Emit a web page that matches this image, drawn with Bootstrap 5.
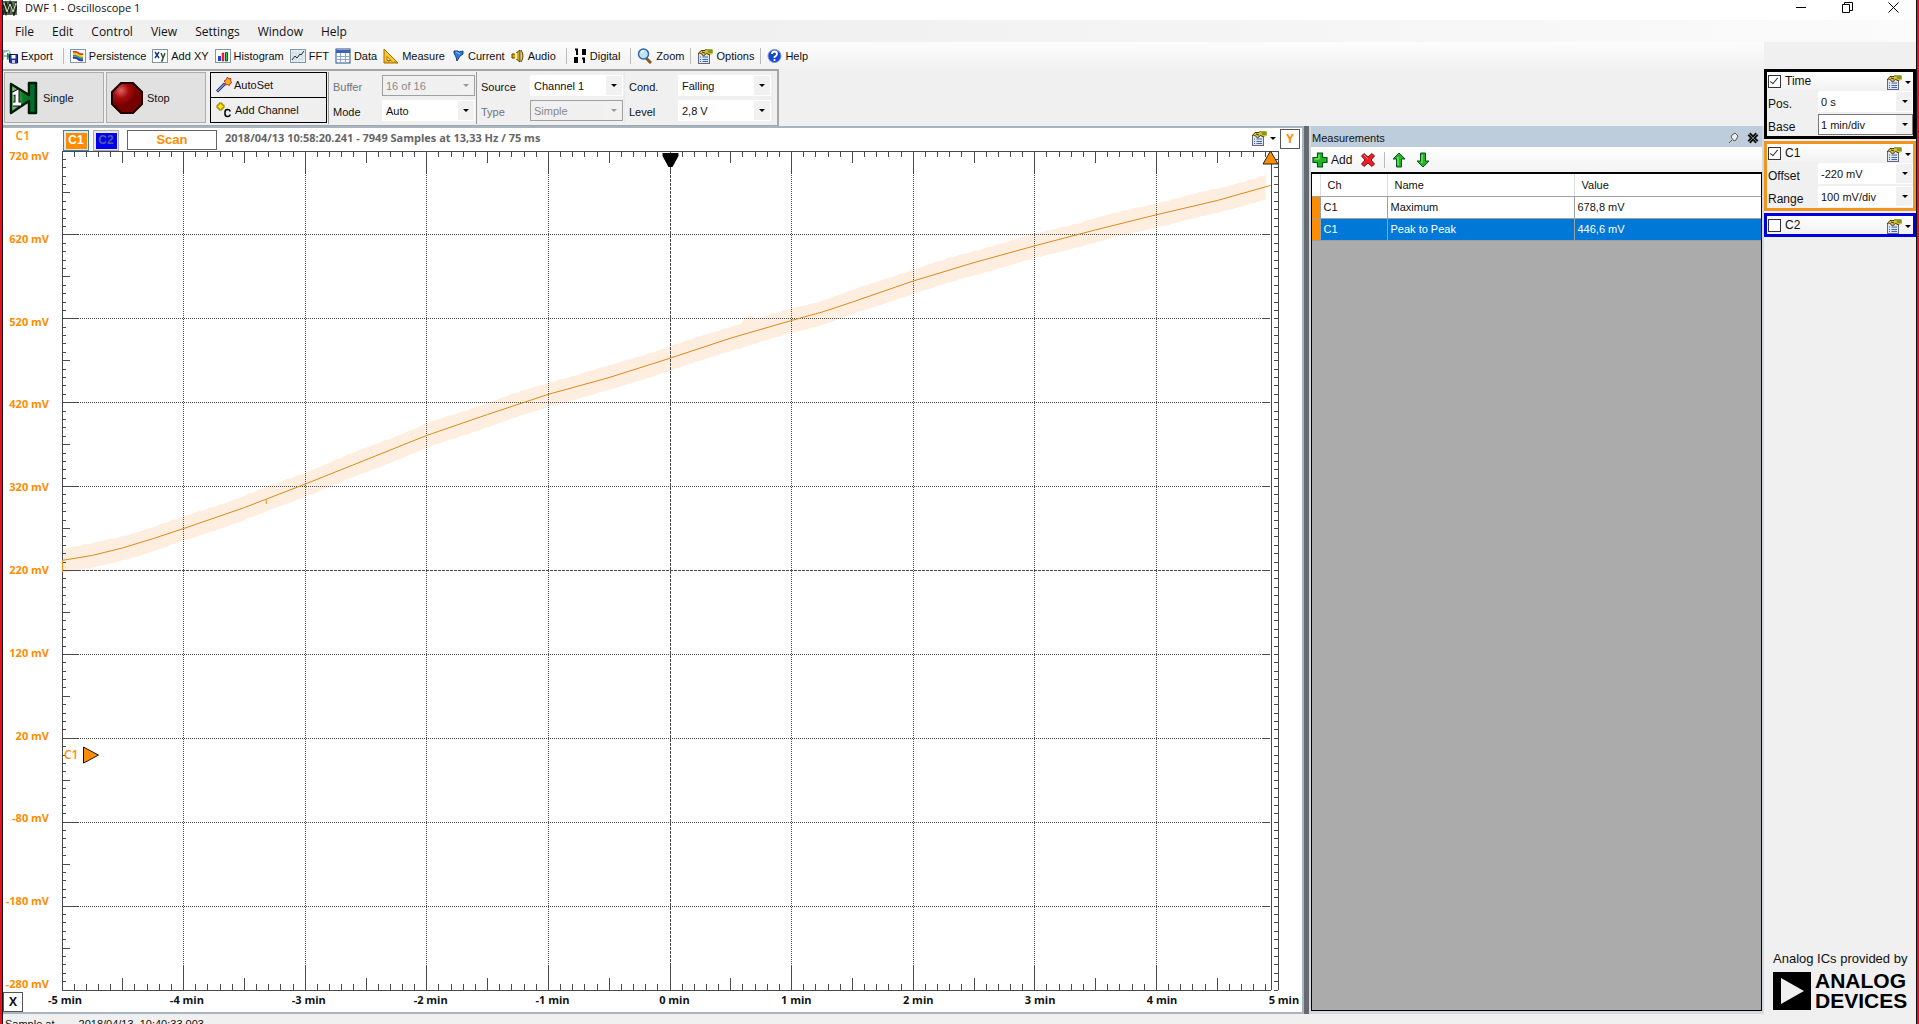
<!DOCTYPE html>
<html lang="en">
<head>
<meta charset="utf-8">
<meta name="viewport" content="width=device-width, initial-scale=1">
<title>DWF 1 - Oscilloscope 1</title>
<link href="https://cdn.jsdelivr.net/npm/bootstrap@5.3.0/dist/css/bootstrap.min.css" rel="stylesheet">
<style>
:root{--orange:#ff8c00;--face:#f0f0f0;--edge:#a5b5c2;--line:#9a9a9a;--ui:"Liberation Sans",Arial,sans-serif;--seg:"Open Sans","Noto Sans",sans-serif}
html,body{height:100%}
body{font:11px/16px var(--ui);color:#111;background:var(--face);overflow:hidden}
button,select,input{font:inherit;color:inherit}
button{background:none;border:0;padding:0}
.app-shell{height:100vh;border-left:2px solid #e81123;border-right:2px solid #e81123;overflow:hidden}
.app-inner{border-left:1px solid #111;border-right:1px solid #111;min-height:0}
.title-strip{height:20px;background:#fff}
.title-strip .caption-text{font:11px/16px var(--seg)}
.win-ctl{width:46px;height:14px;display:flex;justify-content:center;align-items:center}
.menu-strip{height:22px;background:linear-gradient(90deg,#f0f0f0 40%,#fbfbfb);font:12px/24px var(--seg);padding-left:12px}
.menu-strip button{margin-right:18px}
.tool-strip{height:27px;background:linear-gradient(#fdfdfd,#f1f1f1)}
.tool-strip button,.tool-mini button{display:flex;align-items:center;gap:3px;margin-right:6px;white-space:nowrap}
.tool-strip svg,.tool-mini svg{flex:none}
.tool-sep{width:1px;height:16px;background:#bbb;margin-right:6px}
.control-strip{height:57px;width:776px;border:2px solid #a6a6a6;border-left:0;border-bottom-width:1px;padding:1px 5px 0 1px}
.control-strip > *{flex:none}
.big-btn{width:100px;height:51px;background:#e1e1e1;border:1px solid #adadad;display:flex;align-items:center;gap:4px;padding-left:4px;margin-right:2px}
.flat-pair{padding:0 1px 0 2px}
.flat-btn{width:117px;height:26px;border:1px solid #000;background:#efefef;display:flex;align-items:center;padding-left:5px;gap:2px}
.flat-btn + .flat-btn{margin-top:-1px}
.ctl-group{border-left:1px solid var(--line);padding:3px 1px 0 4px;display:grid;grid-template-columns:49px 93px;align-content:start;row-gap:4px;height:52px}
.ctl-group label{line-height:24px;height:21px}
.combo{position:relative;height:21px;background:#fff;border:1px solid #fff}
.combo select{appearance:none;border:0;background:transparent;width:100%;height:100%;padding:0 18px 0 3px;line-height:18px;display:block;opacity:1;outline:0;position:relative;z-index:1}
.combo::before{content:"";position:absolute;right:0;top:0;bottom:0;width:16px;background:#f1f1f1}
.combo::after{content:"";position:absolute;right:5px;top:8px;border:3px solid transparent;border-top-color:#000;border-bottom:0}
.combo.off{background:#f0f0f0;border-color:#a0a0a0;color:#888}
.combo.off::after{border-top-color:#999}
.plot-pane{border:2px solid var(--edge);border-left:0;background:#fff;min-width:0}
.plot-head{height:20px}
.chan-btn{width:26px;height:21px;margin-top:2px;border:1px solid #aaa;padding:1px;background:#e8e8e8;font:bold 12px/15px var(--ui);display:flex;align-items:center;justify-content:center}
.chan-btn span{display:block;width:21px;height:16px}
.chan-btn.c-one{border-color:#3c7fb1;background:#dbe9f3;margin-left:11px}
.c-one span{background:var(--orange);color:#fff}
.c-two span{background:#0000f0;color:#555a9a}
.scan-box{width:90px;height:20px;margin-top:2px;border:1px solid #666;color:var(--orange);font:bold 13px/18px var(--ui);text-align:center}
.stamp{font:bold 11px/20px var(--seg);color:#666}
.y-btn,.x-btn{border:1px solid #555;font:bold 12px/16px var(--seg);width:20px;height:20px;background:#fff}
.y-btn{color:var(--orange);margin:1px 2px 0 4px}
.y-labels{width:49px;padding-right:3px;font:bold 11px/16px var(--seg);color:var(--orange);text-align:right}
.x-labels{font:bold 11px/16px var(--seg);color:#111;margin-left:24px}
.x-labels span{width:36px;text-align:center;white-space:nowrap}
.axis-title{width:49px;font:600 12px/16px var(--seg);color:var(--orange);padding-right:22px;text-align:right}
.scope-box{position:relative;min-width:0}
.scope-box svg{position:absolute;inset:0;width:100%;height:100%}
.scope-box text{font:600 12px var(--seg);fill:var(--orange)}
.splitter{width:5px;background:#666a6e}
.meas-pane{width:455px;padding:0 2px 3px 2px;background:#d3d9df}
.meas-title{height:21px;background:#becddb;padding:2px 3px 0 1px}
.tool-mini{height:25px;background:linear-gradient(#fff,#f3f3f3);font-size:12px;padding-left:1px}
.tool-mini button{margin-right:8px}
.meas-grid{border:1px solid #000;border-top-width:2px;background:#ababab;min-height:0}
.meas-grid table{width:100%;table-layout:fixed;border-collapse:collapse;background:#fff}
.meas-grid th,.meas-grid td{height:22px;border-right:1px solid #a0a0a0;border-bottom:1px solid #a0a0a0;padding:0 3px;font-weight:400;line-height:20px}
.meas-grid th{padding-left:7px;border-right-color:#ddd}
.meas-grid tr>:first-child{width:8px;padding:0}
.meas-grid tbody td:first-child{background:var(--orange)}
.meas-grid .picked td:not(:first-child){background:#0078d7;color:#fff}
.meas-grid tr>:last-child{border-right:0}
.side-pane{width:152px;padding-top:27px}
.side-box{border:3px solid #000;background:#f0f0f0;margin-bottom:2px}
.side-head{height:18px;background:linear-gradient(#fff,#f2f2f2);font-size:12px}
.side-head input{appearance:none;width:13px;height:13px;border:1px solid #333;background:#fff;margin:0 4px 0 1px;position:relative}
.side-head input:checked::after{content:"";position:absolute;left:3px;top:0;width:4px;height:8px;border:solid #333;border-width:0 1px 1px 0;transform:rotate(40deg)}
.opt-btn{display:flex;align-items:center;gap:3px;margin-left:auto;padding-top:2px}
.side-head .opt-btn{margin-right:2px}
.side-row{display:grid;grid-template-columns:50px 1fr;height:23px;align-items:center;padding-left:1px;font-size:12px}
.side-row label{padding-top:4px}
.side-row .combo{font-size:11px}
.side-row .combo select{padding-left:2px}
.side-row .combo::after{right:4px}
.combo.lined{border-color:#777}
.adi{padding:0 8px 3px 9px}
.adi-small{font:13px/16px var(--ui);white-space:nowrap}
.adi-name{font:bold 21px/20px var(--ui);color:#000}
.status-strip{height:10px;overflow:hidden;line-height:16px;padding:2px 2px 0;flex:none}
.arrow-down{width:0;height:0;border:3px solid transparent;border-top-color:#000;border-bottom:0;display:inline-block}
.fill-y{min-height:0}
.fill-x{min-width:0}
</style>
<script src="https://cdn.jsdelivr.net/npm/bootstrap@5.3.0/dist/js/bootstrap.bundle.min.js"></script>
</head>
<body>
<svg width="0" height="0" class="position-absolute">
<symbol id="i-opt" viewBox="0 0 16 16"><rect x="1.500" y="5.500" width="11" height="10" fill="#dce6f5" stroke="#667"/><path d="M3 9h1M5.500 9H11M3 11.500h1M5.500 11.500H11M3 13.500h1M5.500 13.500H11" stroke="#4668a8"/><path d="M1 6l3-3.500h4L9.500 1H15l1 1.500v3L13 7 9.500 5.500 6.500 8 3.500 5z" fill="#d6bd3a"/><path d="M1 6l3-3.500h4L9.500 1M3.500 5l3 3 3-2.500L13 7M5 4l3 1" stroke="#413a10" fill="none"/><path d="M10 1.500h5.500v3.500h-4z" fill="#7a9a22"/></symbol>
</svg>
<div class="app-shell"><div class="app-inner d-flex flex-column h-100">

<header class="title-strip d-flex align-items-start flex-shrink-0">
  <svg width="14" height="16" viewBox="0 0 14 16"><path d="M0 1h14v14H0z" fill="#5b6b55"/><path d="M0 15L3 3l3 9 2-10 2 10 3-10M0 5l3 9 4-12 4 13 3-9" fill="none" stroke="#1c2418" stroke-width="1.500"/><path d="M1 3l3 9 3-8 3 8 3-9" fill="none" stroke="#d3e3c9"/></svg>
  <span class="caption-text ms-1 ps-1">DWF 1 - Oscilloscope 1</span>
  <div class="ms-auto d-flex">
    <button class="win-ctl" aria-label="Minimise"><svg width="11" height="11"><path d="M0 5.500h10" stroke="#000"/></svg></button>
    <button class="win-ctl" aria-label="Restore"><svg width="11" height="11"><path d="M.5 2.500h7v8h-7zM2.500 2.500v-2h8v8h-3" fill="none" stroke="#000"/></svg></button>
    <button class="win-ctl" aria-label="Close"><svg width="11" height="11"><path d="M.5 .5l10 10M10.500 .5l-10 10" stroke="#000"/></svg></button>
  </div>
</header>

<nav class="menu-strip d-flex flex-shrink-0" aria-label="Menu">
  <button>File</button><button>Edit</button><button>Control</button><button>View</button><button>Settings</button><button>Window</button><button>Help</button>
</nav>

<div class="d-flex flex-grow-1 fill-y">
<div class="d-flex flex-column flex-grow-1 fill-x">
  <div class="tool-strip d-flex align-items-center flex-shrink-0">
    <button><svg width="15" height="16" viewBox="0 0 15 16"><path d="M0 2h6l2 3v7H0z" fill="#8fc0c8"/><path d="M1 5l5-2v7l-5 3z" fill="#fff"/><path d="M1 8h5M4 5l4 3-4 3" fill="#2a8a3a" stroke="#2a8a3a"/><path d="M6.500 6.500h8v8.500H7.500L6.500 14z" fill="#2333b0" stroke="#101860"/><path d="M8.500 7h4v3.500h-4z" fill="#fff"/><path d="M9 12h3v3H9z" fill="#ccd"/></svg>Export</button><span class="tool-sep ms-1"></span>
    <button><svg width="16" height="16" viewBox="0 0 16 16"><rect x=".5" y="1.500" width="15" height="13" fill="#fff" stroke="#7d98a8"/><path d="M3 4q3-1 5 1t5 1" stroke="#e33" stroke-width="2" fill="none"/><path d="M3 6q3-1 5 1t5 1" stroke="#ecd01c" stroke-width="2" fill="none"/><path d="M3 8q3-1 5 1t5 1" stroke="#2aa34a" stroke-width="2" fill="none"/><path d="M3 10q3-1 5 1t5 1" stroke="#33c" stroke-width="2" fill="none"/></svg>Persistence</button>
    <button><svg width="16" height="16" viewBox="0 0 16 16"><rect x=".5" y="1.500" width="15" height="13" fill="#fff" stroke="#7d98a8"/><path d="M3 4l4 6M7 4l-4 6" stroke="#1f3a8c" stroke-width="1.500"/><path d="M9 5l2 5M13 5l-3 8H9" stroke="#2c5b2c" stroke-width="1.500" fill="none"/></svg>Add XY</button>
    <button><svg width="16" height="16" viewBox="0 0 16 16"><rect x=".5" y="1.500" width="15" height="13" fill="#fff" stroke="#7d98a8"/><path d="M3 8h3v5H3z" fill="#2446d8"/><path d="M7 5h2v8H7z" fill="#f33" stroke="#900" stroke-width=".5"/><path d="M10.500 4.500h2V13h-2z" fill="#3c5" stroke="#063"/></svg>Histogram</button>
    <button><svg width="16" height="16" viewBox="0 0 16 16"><rect x=".5" y="1.500" width="15" height="13" fill="#eef4f8" stroke="#7d98a8"/><path d="M3 2v12M6 2v12M9 2v12M12 2v12M1 5h14M1 8h14M1 11h14" stroke="#ccd7de"/><path d="M2 12l3-4 2 2 3-4 1 1 3-4" fill="none" stroke="#234"/></svg>FFT</button>
    <button><svg width="16" height="16" viewBox="0 0 16 16"><rect x="1" y="1" width="14" height="14" fill="#fff" stroke="#2a4a86"/><path d="M1 2h14v3H1z" fill="#3b66b5"/><path d="M5.500 5v10M10.500 5v10M2 8.500h12M2 11.500h12" stroke="#8ba6d4"/></svg>Data</button>
    <button><svg width="16" height="16" viewBox="0 0 16 16"><path d="M1 1l14 14H1z" fill="#ffc92b" stroke="#a06a00"/><path d="M4 8.500l4 4H4z" fill="#fff" stroke="#a06a00"/><path d="M3 13v2M6 13v2M9 13v2M12 13v2" stroke="#a06a00" stroke-width=".7"/></svg>Measure</button>
    <button><svg width="14" height="16" viewBox="0 0 14 16"><path d="M3 3h4l1 1 4-1v3L9 8 6 13 5 9 3 5z" fill="#2f7fe0" stroke="#143f86"/><path d="M5 4l4 2" stroke="#9cf"/></svg>Current</button>
    <button><svg width="14" height="16" viewBox="0 0 14 16"><path d="M1 6h3l5-4v12l-5-4H1z" fill="#d8a710" stroke="#5d4300"/><path d="M5 5v6" stroke="#fff0a0" stroke-width="2"/><path d="M10 2q4 6 0 12" fill="#f0d050" stroke="#5d4300"/></svg>Audio</button><span class="tool-sep ms-1"></span>
    <button><svg width="14" height="16" viewBox="0 0 14 16"><path d="M2 1.500h2V7M10 2h2v4h-2zM2 10h2v4H2zM9 10.500h2V15" fill="none" stroke="#000" stroke-width="2"/></svg>Digital</button><span class="tool-sep ms-1"></span>
    <button><svg width="16" height="16" viewBox="0 0 16 16"><path d="M9 10l5 5" stroke="#8a5a1c" stroke-width="3"/><circle cx="6.500" cy="6" r="5" fill="#bfe3f8" stroke="#2d68a8" stroke-width="1.500"/><path d="M4 5q1-2 3-2" stroke="#fff" stroke-width="1.500" fill="none"/></svg>Zoom</button><span class="tool-sep"></span>
    <button><svg width="16" height="16"><use href="#i-opt"/></svg>Options</button><span class="tool-sep"></span>
    <button><svg width="15" height="16" viewBox="0 0 15 16"><circle cx="7.500" cy="8" r="6.500" fill="#1746cf" stroke="#8296cf"/><path d="M5 6q0-2.500 2.500-2.500T10 6q0 1.500-2.500 3v1M7.500 11v2" fill="none" stroke="#fff" stroke-width="1.800"/></svg>Help</button>
  </div>

  <div class="control-strip d-flex flex-shrink-0">
    <button class="big-btn"><svg width="30" height="34" viewBox="0 0 30 34"><defs><linearGradient id="gr"><stop offset="0" stop-color="#9c9"/><stop offset=".5" stop-color="#0a7a22"/><stop offset="1" stop-color="#063"/></linearGradient></defs><path d="M2 3l18 11V2h7v30h-7V20L2 32z" fill="url(#gr)" stroke="#001c06" stroke-width="2.500" stroke-linejoin="round"/><path d="M4 13l4-2v12M4 23h8" stroke="#111" stroke-width="5" fill="none"/><path d="M4 13l4-2v12M4 23h8" stroke="#fff" stroke-width="3" fill="none"/></svg>Single</button>
    <button class="big-btn"><svg width="32" height="34" viewBox="0 0 32 34"><defs><radialGradient id="rd" cx=".3" cy=".25"><stop offset="0" stop-color="#d66"/><stop offset=".5" stop-color="#a80d0d"/><stop offset="1" stop-color="#700"/></radialGradient></defs><path d="M10 2h12l9 9v12l-9 9H10l-9-9V11z" fill="url(#rd)" stroke="#1d0000" stroke-width="2"/></svg>Stop</button>
    <div class="flat-pair d-flex flex-column">
      <button class="flat-btn"><svg width="16" height="16" viewBox="0 0 16 16"><path d="M1 14.500l8-8" stroke="#1c2f80" stroke-width="3"/><path d="M1.500 14l7-7" stroke="#cfe0ff"/><path d="M11.500 0l1 2 2.500-.5-.5 2.500 1.500 1.500-2 1-.5 2-2-1-2.500.5.5-2.500L8 4l2-1z" fill="#f9b122" stroke="#c0391b"/></svg>AutoSet</button>
      <button class="flat-btn"><svg width="17" height="16" viewBox="0 0 17 16"><path d="M3 1h3v2h2v3H6v2H3V6H1V3h2z" fill="#ffe600" stroke="#8a7500"/><path d="M14 9.500q0-2-2.500-2T9 10v2q0 2.500 2.500 2.500T14 12.500" fill="none" stroke="#000" stroke-width="1.500"/></svg>Add Channel</button>
    </div>
    <div class="ctl-group">
      <label for="buf" class="text-secondary">Buffer</label><div class="combo off"><select id="buf" disabled><option>16 of 16</option></select></div>
      <label for="mode">Mode</label><div class="combo"><select id="mode"><option>Auto</option></select></div>
    </div>
    <div class="ctl-group">
      <label for="src">Source</label><div class="combo"><select id="src"><option>Channel 1</option></select></div>
      <label for="typ" class="text-secondary">Type</label><div class="combo off"><select id="typ" disabled><option>Simple</option></select></div>
    </div>
    <div class="ctl-group border-end border-secondary-subtle">
      <label for="cond">Cond.</label><div class="combo"><select id="cond"><option>Falling</option></select></div>
      <label for="lev">Level</label><div class="combo"><select id="lev"><option>2,8 V</option></select></div>
    </div>
  </div>

  <div class="d-flex flex-grow-1 fill-y">
    <main class="plot-pane d-flex flex-column flex-grow-1">
      <div class="plot-head d-flex align-items-start">
        <span class="axis-title">C1</span>
        <button class="chan-btn c-one me-1"><span>C1</span></button>
        <button class="chan-btn c-two"><span>C2</span></button>
        <div class="scan-box ms-2">Scan</div>
        <span class="stamp ms-2">2018/04/13 10:58:20.241 - 7949 Samples at 13,33 Hz / 75 ms</span>
        <button class="opt-btn" aria-label="Plot options"><svg width="16" height="16"><use href="#i-opt"/></svg><span class="arrow-down"></span></button>
        <button class="y-btn">Y</button>
      </div>
      <div class="d-flex flex-grow-1">
        <div class="y-labels d-flex flex-column justify-content-between">
          <span>720 mV</span><span>620 mV</span><span>520 mV</span><span>420 mV</span><span>320 mV</span><span>220 mV</span><span>120 mV</span><span>20 mV</span><span>-80 mV</span><span>-180 mV</span><span>-280 mV</span>
        </div>
        <div class="scope-box flex-grow-1"><svg id="scope" role="img" aria-label="Channel 1 trace"></svg></div>
      </div>
      <div class="d-flex align-items-start">
        <button class="x-btn">X</button>
        <div class="x-labels d-flex justify-content-between flex-grow-1">
          <span>-5 min</span><span>-4 min</span><span>-3 min</span><span>-2 min</span><span>-1 min</span><span>0 min</span><span>1 min</span><span>2 min</span><span>3 min</span><span>4 min</span><span>5 min</span>
        </div>
      </div>
    </main>
    <div class="splitter"></div>
    <aside class="meas-pane d-flex flex-column flex-shrink-0">
      <div class="meas-title d-flex align-items-center flex-shrink-0">Measurements
        <button class="ms-auto me-2 d-flex" aria-label="Pin"><svg width="11" height="12" viewBox="0 0 11 12"><path d="M1 11l3-3M3 5l3 4 2-1 2-4-3-3-3 2z" fill="#eee" stroke="#555"/></svg></button>
        <button class="d-flex" aria-label="Close panel"><svg width="12" height="12" viewBox="0 0 12 12"><path d="M2 2l8 8M10 2l-8 8" stroke="#111" stroke-width="4"/><path d="M2 2l8 8M10 2l-8 8" stroke="#777"/></svg></button>
      </div>
      <div class="tool-mini d-flex align-items-center flex-shrink-0">
        <button><svg width="16" height="16" viewBox="0 0 16 16"><path d="M5.500 1h5v4.500H15v5h-4.500V15h-5v-4.500H1v-5h4.500z" fill="#22b522" stroke="#052" stroke-width="1.200"/><path d="M7 2.500v4.500H2.500" stroke="#a9f07e" fill="none"/></svg>Add</button>
        <button aria-label="Remove"><svg width="16" height="16" viewBox="0 0 16 16"><path d="M4 1.500L8 5l4-3.500 2.500 2.500L11 8l3.500 4-2.500 2.500L8 11l-4 3.500L1.500 12 5 8 1.500 4z" fill="#ef1c24" stroke="#9c0a10"/><path d="M4 3l4 4" stroke="#ff9c9c"/></svg></button><span class="tool-sep"></span>
        <button aria-label="Move up"><svg width="16" height="16" viewBox="0 0 16 16"><path d="M8 1l6 6h-3.500v8h-5V7H2z" fill="#22b522" stroke="#052"/><path d="M7 5v8" stroke="#a9f07e"/></svg></button>
        <button aria-label="Move down"><svg width="16" height="16" viewBox="0 0 16 16"><path d="M8 15l6-6h-3.500V1h-5v8H2z" fill="#22b522" stroke="#052"/><path d="M7 3v8" stroke="#a9f07e"/></svg></button>
      </div>
      <div class="meas-grid flex-grow-1">
        <table>
          <colgroup><col style="width:8px"><col style="width:67px"><col style="width:187px"><col></colgroup>
          <thead><tr><th></th><th>Ch</th><th>Name</th><th>Value</th></tr></thead>
          <tbody>
            <tr><td></td><td>C1</td><td>Maximum</td><td>678,8 mV</td></tr>
            <tr class="picked"><td></td><td>C1</td><td>Peak to Peak</td><td>446,6 mV</td></tr>
          </tbody>
        </table>
      </div>
    </aside>
  </div>
</div>

<aside class="side-pane d-flex flex-column flex-shrink-0">
  <section class="side-box">
    <div class="side-head d-flex align-items-center"><input type="checkbox" id="k1" checked><label for="k1">Time</label><button class="opt-btn" aria-label="Time options"><svg width="16" height="16"><use href="#i-opt"/></svg><span class="arrow-down"></span></button></div>
    <div class="side-row"><label for="pos">Pos.</label><div class="combo"><select id="pos"><option>0 s</option></select></div></div>
    <div class="side-row"><label for="base">Base</label><div class="combo lined"><select id="base"><option>1 min/div</option></select></div></div>
  </section>
  <section class="side-box" style="border-color:#f29420">
    <div class="side-head d-flex align-items-center"><input type="checkbox" id="k2" checked><label for="k2">C1</label><button class="opt-btn" aria-label="C1 options"><svg width="16" height="16"><use href="#i-opt"/></svg><span class="arrow-down"></span></button></div>
    <div class="side-row"><label for="off">Offset</label><div class="combo"><select id="off"><option>-220 mV</option></select></div></div>
    <div class="side-row"><label for="rng">Range</label><div class="combo"><select id="rng"><option>100 mV/div</option></select></div></div>
  </section>
  <section class="side-box" style="border-color:#0000d8">
    <div class="side-head d-flex align-items-center"><input type="checkbox" id="k3"><label for="k3">C2</label><button class="opt-btn" aria-label="C2 options"><svg width="16" height="16"><use href="#i-opt"/></svg><span class="arrow-down"></span></button></div>
  </section>
  <div class="adi mt-auto">
    <div class="adi-small">Analog ICs provided by</div>
    <div class="d-flex align-items-center gap-1 mt-1"><svg width="38" height="38" viewBox="0 0 38 38" class="flex-shrink-0"><path d="M0 0h38v38H0z"/><path d="M8 6l23 13L8 32z" fill="#f0f0f0"/></svg><div class="adi-name">ANALOG<br>DEVICES</div></div>
  </div>
</aside>
</div>

<footer class="status-strip d-flex gap-3"><span>Sample at</span><span class="ms-2">2018/04/13 &nbsp;10:40:33.003</span></footer>
</div></div>

<script>
// Trace: time in minutes, C1 level in millivolts
const trace = [[-5,232],[-4.75,238],[-4.5,247],[-4.25,258],[-4,270],[-3.5,295],[-3,323],[-2.5,352],[-2,381],[-1.5,406],[-1,430],[-.5,450],[0,473],[.5,497],[1,518],[1.25,528],[1.5,540],[2,565],[2.5,587],[3,607],[3.5,626],[4,644],[4.5,661],[4.94,679]];
const scope = document.getElementById('scope');
function draw(){
  const W = scope.parentElement.clientWidth, H = scope.parentElement.clientHeight;
  const L = 10, R = W - 24, T = 3, B = H - 2, E = R - 7;
  const X = t => L + (t + 5) * (R - L) / 10, Y = v => B - (v + 280) * (B - T) / 1000;
  const r = n => Math.floor(n) + .5;
  let ticks = '', dots = '', mid = '';
  for (let i = 0; i <= 100; i++) {
    const x = r(X(-5 + i / 10)), y = r(Y(-280 + i * 10)), k = i % 10 === 0, h = i % 5 === 0;
    if (x < E) {
      ticks += `M${x} ${T}v${k ? 23 : h ? 12 : 6}M${x} ${B}v${k ? -25 : h ? -12 : -6}`;
      if (k && i && i !== 50) dots += `M${x} ${T + 24}V${B - 25}`;
      if (i === 50) mid += `M${x} ${T + 16}V${B - 25}`;
    }
    ticks += `M${L} ${y}h${k ? 16 : h ? 8 : 4}M${R} ${y}h-4`;
    if (k && i && i < 100) {
      ticks += `M${E - 1} ${y}h-8`;
      if (i === 50) mid += `M${L + 16} ${y}H${E - 9}`; else dots += `M${L + 16} ${y}H${E - 9}`;
    }
  }
  const at = t => { let j = 1; while (j < trace.length - 1 && trace[j][0] < t) j++; const [a, b] = [trace[j - 1], trace[j]]; return a[1] + (b[1] - a[1]) * (t - a[0]) / (b[0] - a[0]); };
  let up = [], low = [];
  for (let t = -5; t <= 4.935; t += .045) {
    const n = Math.sin(t * 9) * .6 + Math.sin(t * 61) * .6;
    const spur = Math.abs(t - .65) < .03 ? 6 : 0;
    up.push(`${X(t)},${Y(at(t) + 14 + n + spur)}`);
    low.unshift(`${X(t)},${Y(at(t) - 15 + n * .7)}`);
  }
  const line = trace.map(p => `${X(p[0])},${Y(p[1])}`).join(' ');
  const c = r(X(0)), z = Y(0);
  scope.innerHTML = `<polygon points="${up.concat(low).join(' ')}" fill="#fdeee0"/>
  <g fill="none" stroke="#4a4a4a" shape-rendering="crispEdges">
  <path d="${dots}" stroke-dasharray="1 1"/><path d="${mid}" stroke-dasharray="3 1"/>
  <path d="${ticks}M${L + .5} ${T}V${B}M${R + .5} ${T}V${B}M${E + .5} ${T}V${B}M${L} ${T + .5}H${R}M${L} ${B + .5}H${E}M${R - 4} ${B + .5}H${R}"/></g>
  <polyline points="${line}" fill="none" stroke="#dc8a18"/>
  <path d="M${L + .5} ${Y(232)}V${Y(218)}M${X(-3.32)} ${Y(304)}v4" stroke="#f08a1c"/>
  <path d="M${c - 8} ${T + 2}h16v3l-6 11h-4l-6-11z" fill="#000"/>
  <path d="M${E - .5} ${T}l7.500 13h-15z" fill="#ff8c00" stroke="#222"/>
  <path d="M31.500 ${z - 8}l15 8l-15 8z" fill="#ff8c00" stroke="#111"/>
  <text x="12" y="${z + 4}">C1</text>`;
}
draw();
addEventListener('resize', draw);
</script>
</body>
</html>
